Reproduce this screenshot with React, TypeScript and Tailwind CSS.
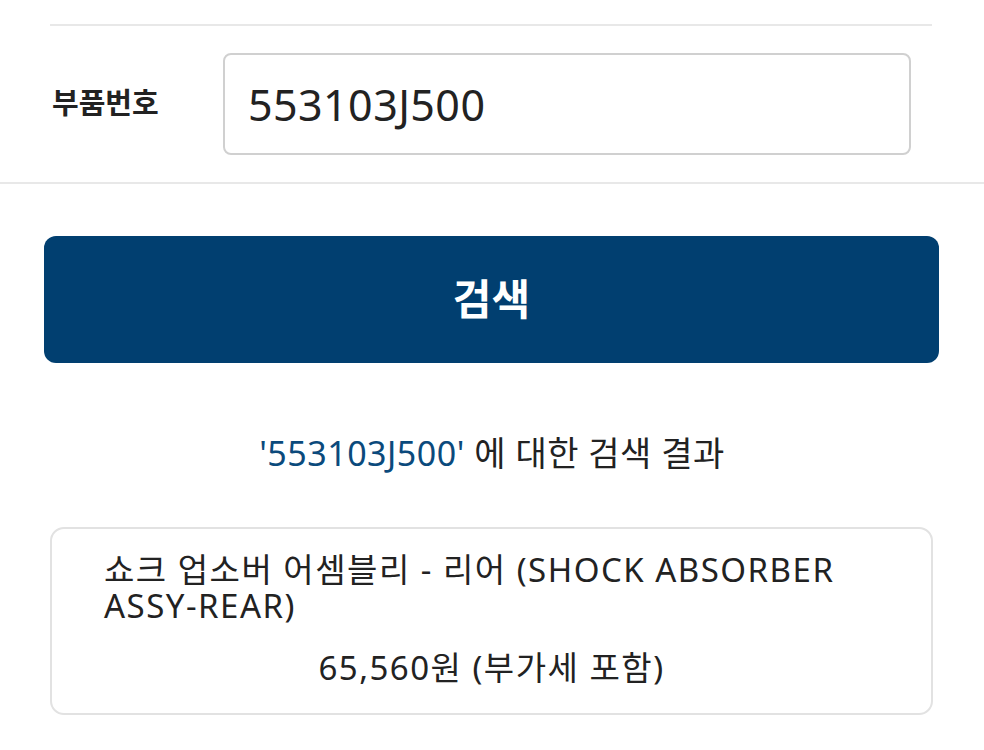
export default function App() {
  return (
    <div
      className="min-h-[750px] w-full bg-white text-[#222]"
      style={{ fontFamily: '"Noto Sans", "Noto Sans CJK KR", sans-serif' }}
    >
      <div className="px-[50px] pt-[24px]">
        <div className="h-[2px] w-[882px] bg-[#e8e8e8]" />
        <div className="flex items-center py-[27px]">
          <div className="w-[173px] pl-[2px] pb-[4px] text-[29px] font-bold leading-none text-[#222]">
            부품번호
          </div>
          <div className="flex h-[102px] w-[688px] items-center rounded-[8px] border-2 border-[#d0d0d0] px-[23px]">
            <span className="text-[43px] leading-none tracking-[0.01em] text-[#222]">553103J500</span>
          </div>
        </div>
      </div>
      <div className="h-[2px] w-full bg-[#e8e8e8]" />

      <div className="px-[44px] pt-[52px]">
        <button className="flex h-[127px] w-[895px] items-center justify-center rounded-[12px] bg-[#013f70] pb-[2px] text-[42px] font-bold text-white">
          검색
        </button>
      </div>

      <div className="pt-[70px] text-center text-[34px] leading-[40px] tracking-[0.015em] text-[#222]">
        <span className="text-[#0b4a7c]">'553103J500'</span> 에 대한 검색 결과
      </div>

      <div className="px-[50px] pt-[54px]">
        <div className="flex h-[188px] w-[883px] flex-col rounded-[14px] border-2 border-[#e2e2e2] px-[52px] pt-[23px]">
          <div className="text-[33px] leading-[36px] tracking-[0.045em] text-[#222]">
            쇼크 업소버 어셈블리 - 리어 (SHOCK ABSORBER{" "}
            <span className="whitespace-nowrap">ASSY-REAR)</span>
          </div>
          <div className="pt-[26px] text-center text-[33px] leading-[36px] tracking-[0.045em] text-[#222]">
            65,560원 (부가세 포함)
          </div>
        </div>
      </div>
    </div>
  );
}
